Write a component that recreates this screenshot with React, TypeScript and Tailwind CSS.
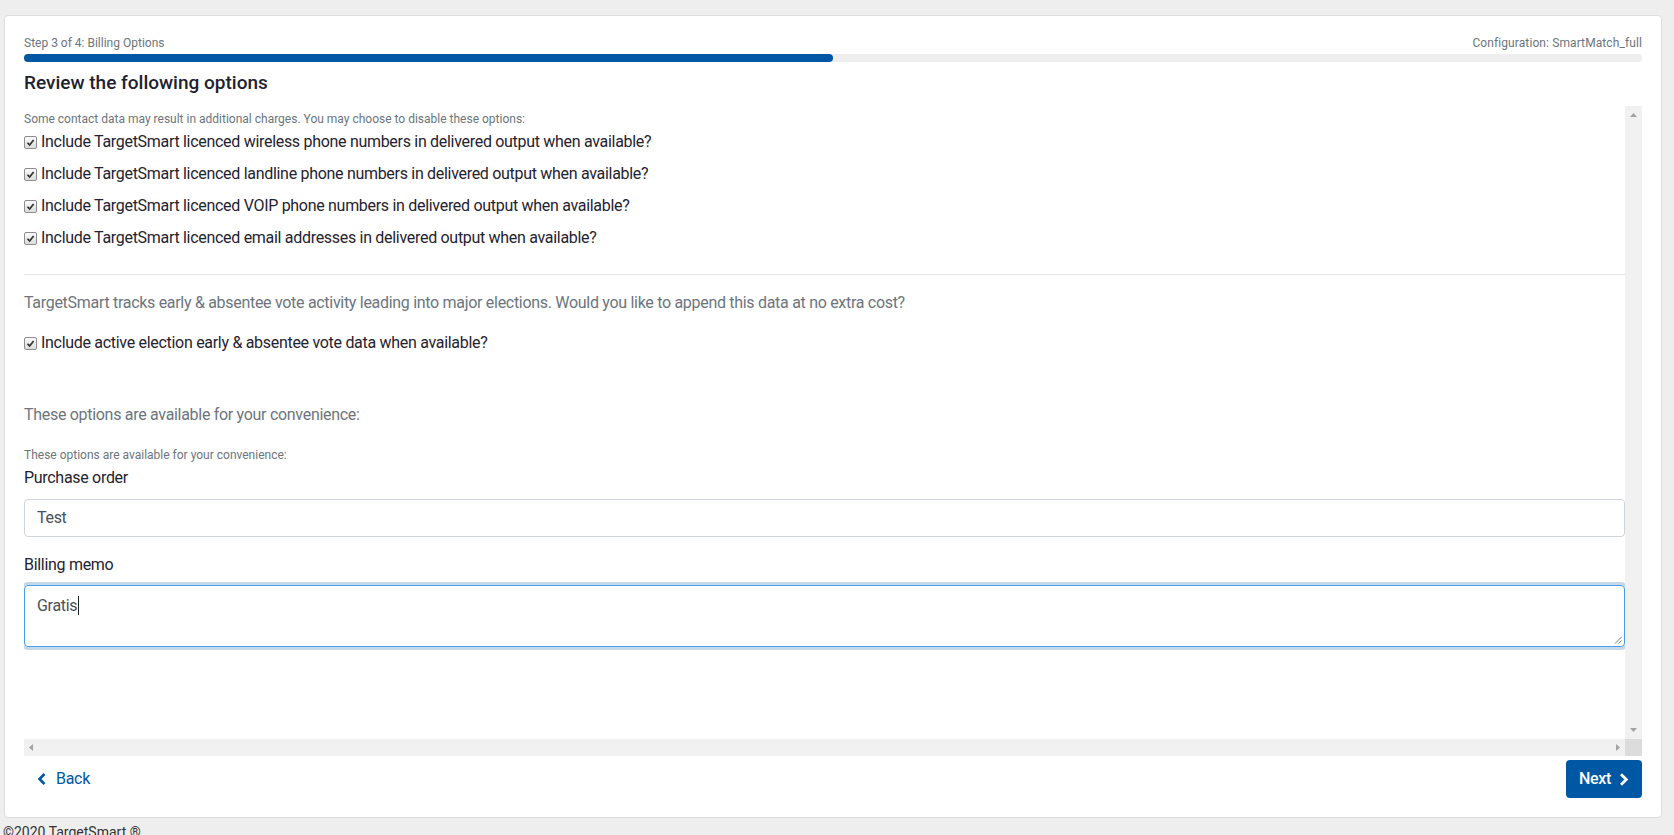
import React from 'react';

const CONTACT_OPTIONS = [
  'Include TargetSmart licenced wireless phone numbers in delivered output when available?',
  'Include TargetSmart licenced landline phone numbers in delivered output when available?',
  'Include TargetSmart licenced VOIP phone numbers in delivered output when available?',
  'Include TargetSmart licenced email addresses in delivered output when available?',
];

function CheckBox() {
  return (
    <span className="inline-flex h-[13px] w-[13px] shrink-0 items-center justify-center rounded-[2px] border border-[#8d8d8d] bg-linear-to-b from-[#fbfbfb] to-[#dcdcdc]">
      <svg viewBox="0 0 10 10" className="h-[9px] w-[9px]">
        <path d="M1.6 5.3 L4 7.7 L8.5 2.3" fill="none" stroke="#333" strokeWidth="1.9" />
      </svg>
    </span>
  );
}

function OptionRow({ text }: { text: string }) {
  return (
    <label className="flex h-[24px] items-center gap-[4px] text-[16px] leading-[24px] tracking-[-0.3px] text-[#1f2230]">
      <CheckBox />
      <span>{text}</span>
    </label>
  );
}

function Arrow({ dir }: { dir: 'up' | 'down' | 'left' | 'right' }) {
  const pts = {
    up: '0,4 3.5,0 7,4',
    down: '0,0 7,0 3.5,4',
    left: '4,0 4,7 0,3.5',
    right: '0,0 4,3.5 0,7',
  }[dir];
  const vertical = dir === 'up' || dir === 'down';
  return (
    <svg
      viewBox={vertical ? '0 0 7 4' : '0 0 4 7'}
      className={vertical ? 'h-[4px] w-[7px]' : 'h-[7px] w-[4px]'}
    >
      <polygon points={pts} fill="#a3a3a3" />
    </svg>
  );
}

export default function App() {
  return (
    <div className="min-h-screen w-full bg-[#eeeeee] pt-[15px] font-['Roboto','Liberation_Sans',sans-serif] text-[#212529]">
      <div className="ml-[4px] mr-[12px] rounded-[4px] border border-[#dddddd] bg-white px-[19px] pb-[19px] pt-[18px]">
        {/* Step header */}
        <div className="flex h-[18px] items-center justify-between text-[12px] leading-[18px] text-[#6c757d]">
          <span>Step 3 of 4: Billing Options</span>
          <span className="tracking-[0.1px]">Configuration: SmartMatch_full</span>
        </div>
        <div className="mt-[2px] h-[8px] w-full rounded-full bg-[#eeeeee]">
          <div className="h-full w-1/2 rounded-full bg-[#0057a3]" />
        </div>

        <h5 className="mt-[7px] text-[19px] font-medium leading-[27px] text-[#1d2230]">Review the following options</h5>

        {/* Scroll area */}
        <div className="mt-[10px] flex h-[650px] flex-col">
          <div className="flex min-h-0 flex-1">
            <div className="min-w-0 flex-1 overflow-hidden pt-[4px] tracking-[-0.3px]">
              <p className="text-[12px] leading-[18px] tracking-normal text-[#6c757d]">
                Some contact data may result in additional charges. You may choose to disable these options:
              </p>
              <div className="mt-[2px] flex flex-col gap-[8px]">
                {CONTACT_OPTIONS.map((o) => (
                  <OptionRow key={o} text={o} />
                ))}
              </div>

              <div className="mt-[24px] border-t border-[#e5e5e5]" />

              <p className="mt-[16px] text-[16px] leading-[24px] text-[#6c757d]">
                TargetSmart tracks early &amp; absentee vote activity leading into major elections. Would you like to
                append this data at no extra cost?
              </p>
              <div className="mt-[16px]">
                <OptionRow text="Include active election early & absentee vote data when available?" />
              </div>

              <p className="mt-[48px] text-[16px] leading-[24px] text-[#6c757d]">
                These options are available for your convenience:
              </p>
              <p className="mt-[19px] text-[12px] leading-[18px] tracking-normal text-[#6c757d]">
                These options are available for your convenience:
              </p>

              <div className="mt-[2px] text-[16px] leading-[24px] text-[#1f2230]">Purchase order</div>
              <div className="mt-[9px] flex h-[38px] items-center rounded-[4px] border border-[#ced4da] px-[12px] text-[16px] text-[#495057]">
                Test
              </div>

              <div className="mt-[16px] text-[16px] leading-[24px] text-[#1f2230]">Billing memo</div>
              <div className="relative mt-[8px] h-[62px] rounded-[4px] border border-[#4a9be8] px-[12px] py-[6px] text-[16px] leading-[24px] text-[#495057] shadow-[0_0_0_3px_#c6d9ec]">
                <span>Gratis</span>
                <span className="ml-[1px] inline-block h-[19px] w-px translate-y-[4px] bg-[#222]" />
                <svg viewBox="0 0 8 8" className="absolute bottom-[2px] right-[2px] h-[8px] w-[8px]">
                  <path d="M7.5 1 L1 7.5 M7.5 4.5 L4.5 7.5" stroke="#777" strokeWidth="1" />
                </svg>
              </div>
            </div>
            <div className="flex w-[17px] flex-col items-center justify-between bg-[#f1f1f1] py-[7px]">
              <Arrow dir="up" />
              <Arrow dir="down" />
            </div>
          </div>
          <div className="flex h-[17px]">
            <div className="flex flex-1 items-center justify-between bg-[#f1f1f1] px-[5px]">
              <Arrow dir="left" />
              <Arrow dir="right" />
            </div>
            <div className="w-[17px] bg-[#dcdcdc]" />
          </div>
        </div>

        {/* Footer buttons */}
        <div className="mt-[4px] flex h-[38px] items-center justify-between tracking-[-0.3px]">
          <button className="flex h-[38px] items-center gap-[10px] px-[13px] text-[16px] text-[#0057a3]">
            <svg viewBox="0 0 9 12" className="h-[12px] w-[9px]">
              <path d="M7.5 1 L2.5 6 L7.5 11" fill="none" stroke="#0057a3" strokeWidth="2.6" />
            </svg>
            Back
          </button>
          <button className="flex h-[38px] items-center gap-[8px] rounded-[4px] bg-[#0057a3] px-[13px] text-[16px] font-medium text-white">
            Next
            <svg viewBox="0 0 10 13" className="h-[13px] w-[10px]">
              <path d="M2 1.2 L7.3 6.5 L2 11.8" fill="none" stroke="#ffffff" strokeWidth="2.8" />
            </svg>
          </button>
        </div>
      </div>
      <div className="ml-[3px] mt-[4px] text-[14px] leading-[20px] text-[#333333]">©2020 TargetSmart ®</div>
    </div>
  );
}
